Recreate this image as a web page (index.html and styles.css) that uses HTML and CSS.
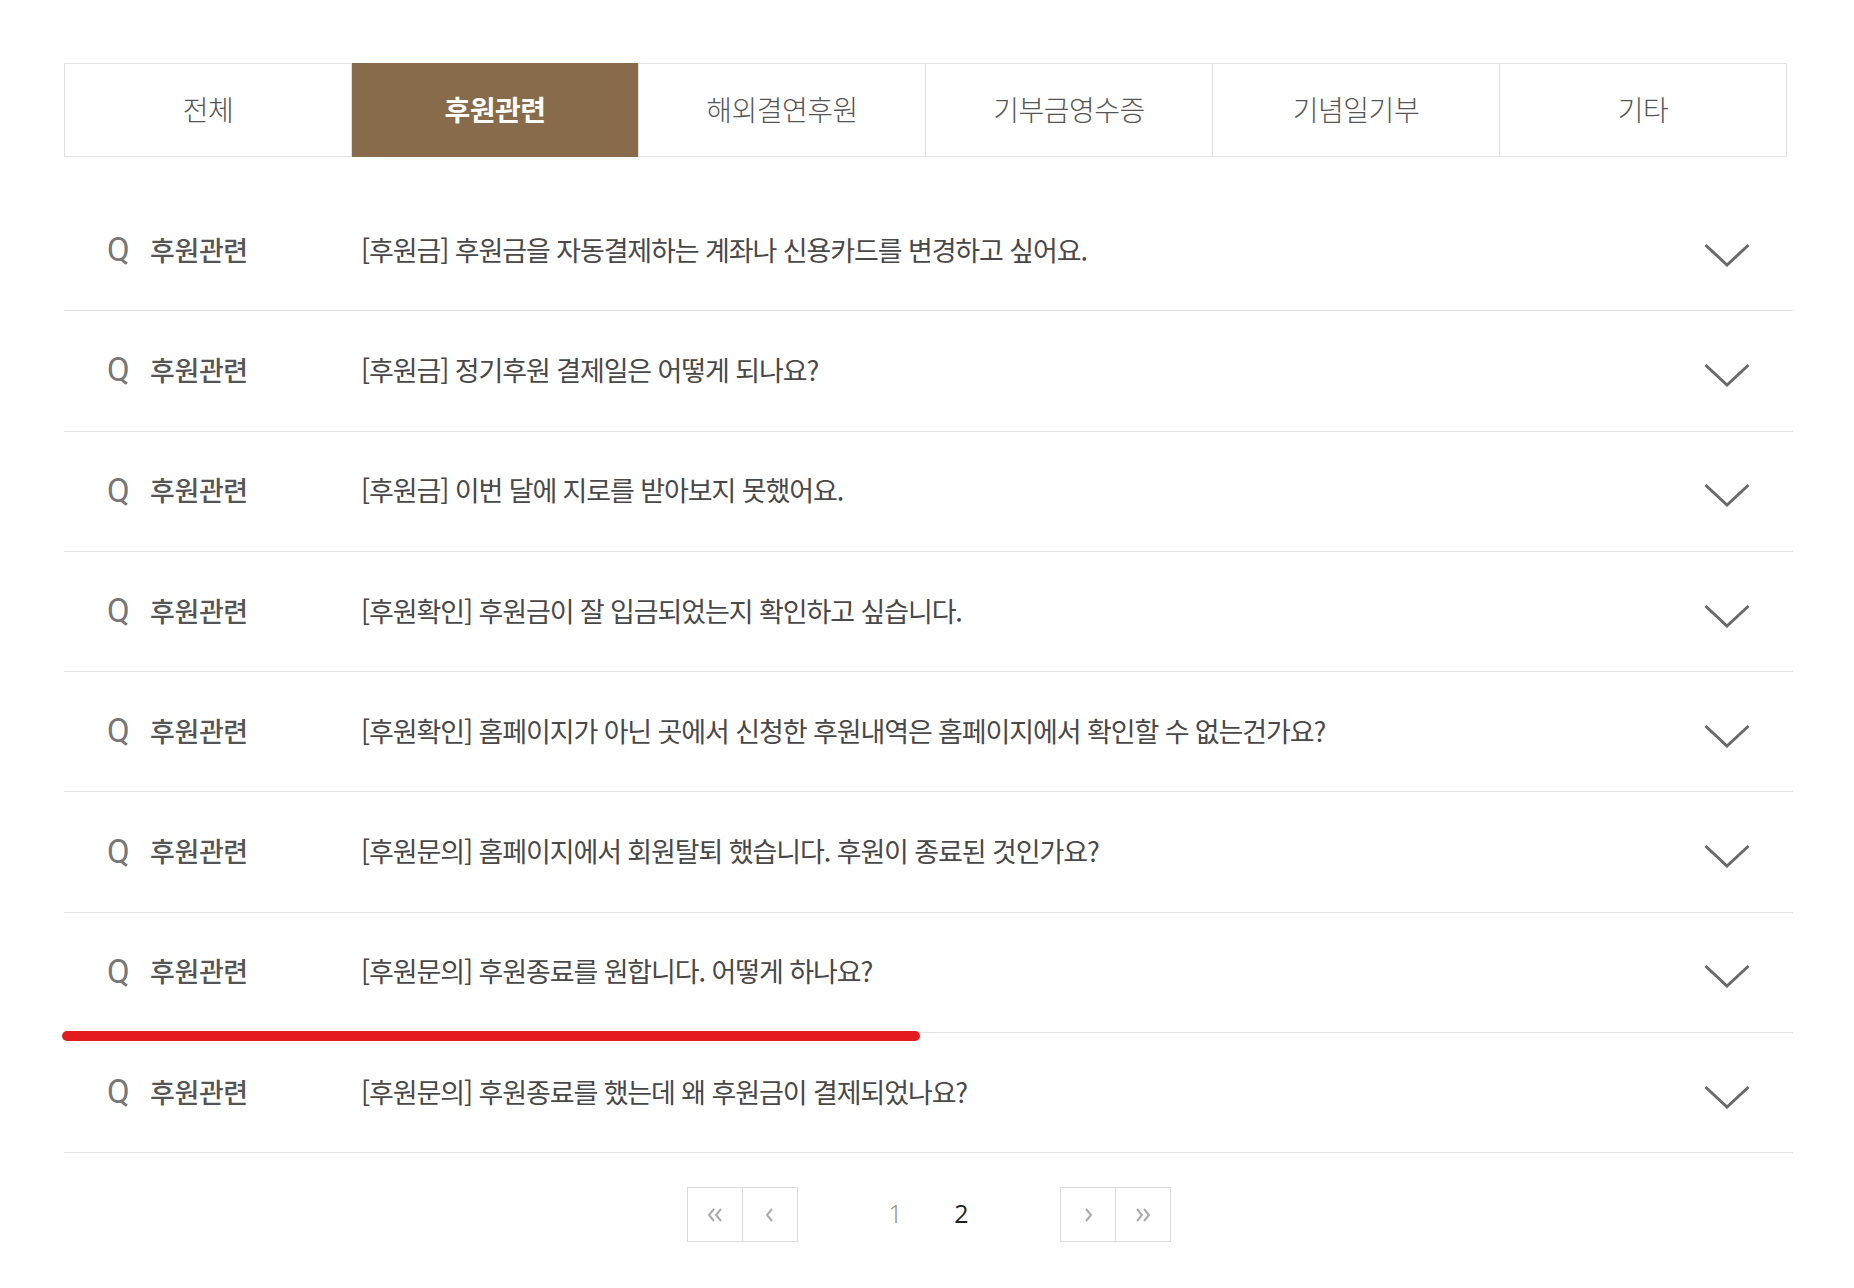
FILE: index.html
```html
<!DOCTYPE html>
<html lang="ko">
<head>
    <meta charset="utf-8">
    <title>자주 묻는 질문</title>
    <link rel="stylesheet" href="styles.css">
</head>
<body>
    <div class="faq">
        <ul class="tabs">
            <li>전체</li>
            <li class="on">후원관련</li>
            <li>해외결연후원</li>
            <li>기부금영수증</li>
            <li>기념일기부</li>
            <li>기타</li>
        </ul>

        <ul class="faq-list">
            <li class="row">
                <span class="q">Q</span>
                <span class="cate">후원관련</span>
                <span class="subject">[후원금] 후원금을 자동결제하는 계좌나 신용카드를 변경하고 싶어요.</span>
                <svg class="arrow" width="46" height="24" viewBox="0 0 46 24"><polyline points="1.5,2 23,22 44.5,2" fill="none" stroke="#6a6a6a" stroke-width="3"/></svg>
            </li>
            <li class="row">
                <span class="q">Q</span>
                <span class="cate">후원관련</span>
                <span class="subject">[후원금] 정기후원 결제일은 어떻게 되나요?</span>
                <svg class="arrow" width="46" height="24" viewBox="0 0 46 24"><polyline points="1.5,2 23,22 44.5,2" fill="none" stroke="#6a6a6a" stroke-width="3"/></svg>
            </li>
            <li class="row">
                <span class="q">Q</span>
                <span class="cate">후원관련</span>
                <span class="subject">[후원금] 이번 달에 지로를 받아보지 못했어요.</span>
                <svg class="arrow" width="46" height="24" viewBox="0 0 46 24"><polyline points="1.5,2 23,22 44.5,2" fill="none" stroke="#6a6a6a" stroke-width="3"/></svg>
            </li>
            <li class="row">
                <span class="q">Q</span>
                <span class="cate">후원관련</span>
                <span class="subject">[후원확인] 후원금이 잘 입금되었는지 확인하고 싶습니다.</span>
                <svg class="arrow" width="46" height="24" viewBox="0 0 46 24"><polyline points="1.5,2 23,22 44.5,2" fill="none" stroke="#6a6a6a" stroke-width="3"/></svg>
            </li>
            <li class="row">
                <span class="q">Q</span>
                <span class="cate">후원관련</span>
                <span class="subject">[후원확인] 홈페이지가 아닌 곳에서 신청한 후원내역은 홈페이지에서 확인할 수 없는건가요?</span>
                <svg class="arrow" width="46" height="24" viewBox="0 0 46 24"><polyline points="1.5,2 23,22 44.5,2" fill="none" stroke="#6a6a6a" stroke-width="3"/></svg>
            </li>
            <li class="row">
                <span class="q">Q</span>
                <span class="cate">후원관련</span>
                <span class="subject">[후원문의] 홈페이지에서 회원탈퇴 했습니다. 후원이 종료된 것인가요?</span>
                <svg class="arrow" width="46" height="24" viewBox="0 0 46 24"><polyline points="1.5,2 23,22 44.5,2" fill="none" stroke="#6a6a6a" stroke-width="3"/></svg>
            </li>
            <li class="row">
                <span class="q">Q</span>
                <span class="cate">후원관련</span>
                <span class="subject">[후원문의] 후원종료를 원합니다. 어떻게 하나요?</span>
                <svg class="arrow" width="46" height="24" viewBox="0 0 46 24"><polyline points="1.5,2 23,22 44.5,2" fill="none" stroke="#6a6a6a" stroke-width="3"/></svg>
                <span class="mark"></span>
            </li>
            <li class="row">
                <span class="q">Q</span>
                <span class="cate">후원관련</span>
                <span class="subject">[후원문의] 후원종료를 했는데 왜 후원금이 결제되었나요?</span>
                <svg class="arrow" width="46" height="24" viewBox="0 0 46 24"><polyline points="1.5,2 23,22 44.5,2" fill="none" stroke="#6a6a6a" stroke-width="3"/></svg>
            </li>
        </ul>

        <div class="paging">
            <div class="btns">
                <a href="#" class="btn"><svg width="16" height="14" viewBox="0 0 16 14"><polyline points="7,1 2,7 7,13" fill="none" stroke="#aaa" stroke-width="2"/><polyline points="14,1 9,7 14,13" fill="none" stroke="#aaa" stroke-width="2"/></svg></a>
                <a href="#" class="btn"><svg width="10" height="14" viewBox="0 0 10 14"><polyline points="7,1 2,7 7,13" fill="none" stroke="#aaa" stroke-width="2"/></svg></a>
            </div>
            <a href="#" class="num">1</a>
            <a href="#" class="num current">2</a>
            <div class="btns">
                <a href="#" class="btn"><svg width="10" height="14" viewBox="0 0 10 14"><polyline points="3,1 8,7 3,13" fill="none" stroke="#aaa" stroke-width="2"/></svg></a>
                <a href="#" class="btn"><svg width="16" height="14" viewBox="0 0 16 14"><polyline points="2,1 7,7 2,13" fill="none" stroke="#aaa" stroke-width="2"/><polyline points="9,1 14,7 9,13" fill="none" stroke="#aaa" stroke-width="2"/></svg></a>
            </div>
        </div>
    </div>
</body>
</html>
```

FILE: styles.css
```css
body {
    margin: 0;
    background-color: #fff;
    font-family: "Noto Sans CJK KR", "Noto Sans", sans-serif;
    color: #555;
}
ul {
    list-style: none;
    margin: 0;
    padding: 0;
}
a {
    text-decoration: none;
    color: inherit;
}
.faq {
    width: 1729px;
    margin: 0 0 0 64px;
    padding-top: 63px;
}
.tabs {
    display: flex;
    width: 1721px;
    border: 1px solid #e2e2e2;
}
.tabs li {
    flex: 1;
    height: 90px;
    padding-bottom: 2px;
    display: flex;
    align-items: center;
    justify-content: center;
    border-left: 1px solid #e2e2e2;
    font-size: 28px;
    font-weight: 300;
    letter-spacing: -0.5px;
    color: #555;
}
.tabs li:first-child {
    border-left: 0;
}
.tabs li.on {
    background-color: #876b4b;
    color: #fff;
    font-weight: 700;
    margin: -1px 0;
    height: 92px;
}
.faq-list {
    margin-top: 34px;
}
.row {
    position: relative;
    display: flex;
    align-items: center;
    height: 119.3px;
    padding: 0 43px;
    border-bottom: 1px solid #e2e2e2;
}
.q {
    width: 43px;
    margin-top: -2px;
    font-family: Roboto, sans-serif;
    font-size: 33px;
    color: #777;
    line-height: 1;
}
.cate {
    width: 211px;
    margin-top: -3px;
    font-size: 27px;
    font-weight: 500;
    letter-spacing: -0.4px;
    color: #555;
}
.subject {
    flex: 1;
    margin-top: -3px;
    font-size: 27px;
    font-weight: 400;
    letter-spacing: -1.1px;
    color: #484848;
}
.arrow {
    margin-top: 8px;
}
.mark {
    position: absolute;
    left: -2px;
    bottom: -9px;
    width: 858px;
    height: 10px;
    border-radius: 5px;
    background-color: #e31b1f;
}
.paging {
    display: flex;
    justify-content: center;
    align-items: center;
    margin-top: 34px;
    padding-bottom: 45px;
}
.btns {
    display: flex;
    border: 1px solid #dcdcdc;
}
.btn {
    width: 54px;
    height: 53px;
    display: flex;
    align-items: center;
    justify-content: center;
}
.btn + .btn {
    border-left: 1px solid #dcdcdc;
}
.btns:first-child {
    margin-right: 65px;
}
.btns:last-child {
    margin-left: 65px;
}
.num {
    width: 66px;
    margin-top: -3px;
    text-align: center;
    font-family: "Open Sans", sans-serif;
    font-size: 25px;
    color: #888;
    font-weight: 300;
}
.num.current {
    color: #222;
    font-weight: 400;
}
```
